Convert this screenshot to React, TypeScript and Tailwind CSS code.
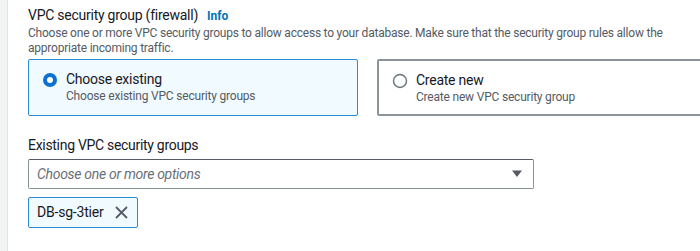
import React from "react";

function RadioOn() {
  return (
    <svg width="16" height="16" viewBox="0 0 16 16" className="shrink-0">
      <circle cx="8" cy="8" r="7" fill="#0972d3" />
      <circle cx="8" cy="8" r="3" fill="#ffffff" />
    </svg>
  );
}

function RadioOff() {
  return (
    <svg width="16" height="16" viewBox="0 0 16 16" className="shrink-0">
      <circle cx="8" cy="8" r="6.5" fill="#ffffff" stroke="#687078" strokeWidth="1.4" />
    </svg>
  );
}

export default function App() {
  return (
    <div
      className="flex w-[700px] h-[251px] bg-white overflow-hidden text-[#16191f]"
      style={{ fontFamily: 'Roboto, "Open Sans", Arial, sans-serif' }}
    >
      <div className="w-[8px] shrink-0 bg-[#f2f3f3] border-r border-[#e1e4e6]" />
      <div className="flex-1 pl-[20px] pt-[4px] min-w-0">
        <div className="flex items-baseline gap-[9px] whitespace-nowrap">
          <span className="text-[14px] leading-[22px] tracking-[-0.25px] text-[#16191f]">VPC security group (firewall)</span>
          <span className="text-[12px] font-bold text-[#0073bb]">Info</span>
        </div>
        <p className="text-[12px] leading-[15px] tracking-[-0.22px] text-[#545b64] w-[660px]">
          Choose one or more VPC security groups to allow access to your database. Make sure that the security group rules allow the appropriate incoming traffic.
        </p>
        <div className="grid grid-cols-[330px_330px] gap-[19px] mt-[3px] w-[700px]">
          <div className="h-[57px] border-[1.5px] border-[#2a8ad4] bg-[#f1faff] rounded-[2px] pl-[13px] pt-[10px] flex gap-[8px]">
            <div className="pt-[2px]"><RadioOn /></div>
            <div>
              <div className="text-[14px] leading-[18px] tracking-[-0.25px] text-[#16191f]">Choose existing</div>
              <div className="text-[12px] leading-[17px] tracking-[-0.2px] text-[#545b64]">Choose existing VPC security groups</div>
            </div>
          </div>
          <div className="h-[57px] border-2 border-[#8d9499] bg-white rounded-[2px] pl-[13px] pt-[10px] flex gap-[8px]">
            <div className="pt-[2px]"><RadioOff /></div>
            <div>
              <div className="text-[14px] leading-[18px] tracking-[-0.25px] text-[#16191f]">Create new</div>
              <div className="text-[12px] leading-[17px] tracking-[-0.2px] text-[#545b64]">Create new VPC security group</div>
            </div>
          </div>
        </div>
        <div className="mt-[19px] text-[14px] leading-[20px] tracking-[-0.3px] text-[#16191f]">Existing VPC security groups</div>
        <div className="mt-[4px] w-[506px] h-[30px] border border-[#879596] border-t-[#545b64] rounded-[2px] flex items-center justify-between pl-[8px] pr-[11px]">
          <span className="text-[14px] italic tracking-[-0.3px] text-[#687078]">Choose one or more options</span>
          <svg width="10" height="8" viewBox="0 0 10 8">
            <path d="M0 0.5 H10 L5 7 Z" fill="#545b64" />
          </svg>
        </div>
        <div className="mt-[8px] inline-flex items-center h-[31px] border border-[#2a8ad4] bg-[#f1faff] rounded-[2px] pl-[8px] pr-[9px] gap-[11px]">
          <span className="text-[14px] tracking-[-0.2px] text-[#16191f]">DB-sg-3tier</span>
          <svg width="13" height="13" viewBox="0 0 13 13">
            <path d="M1 1 L12 12 M12 1 L1 12" stroke="#545b64" strokeWidth="1.8" />
          </svg>
        </div>
      </div>
    </div>
  );
}
